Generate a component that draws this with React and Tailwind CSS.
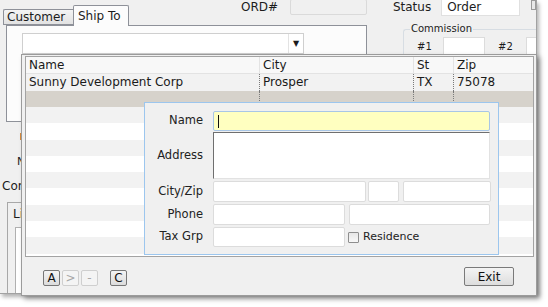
import React from "react";

const cols = [
  { key: "name", label: "Name", w: "w-[234px] border-r" },
  { key: "city", label: "City", w: "w-[154px] border-r" },
  { key: "st", label: "St", w: "w-[40px] border-r" },
  { key: "zip", label: "Zip", w: "flex-1" },
];

const rows = [
  { name: "Sunny Development Corp", city: "Prosper", st: "TX", zip: "75078" },
  { name: "", city: "", st: "", zip: "", selected: true },
];

const field = "bg-white border border-[#dcdcdc] rounded-[2px]";

const SmallButton = ({ label, disabled, className = "" }) => (
  <div
    className={`h-[16px] w-[17px] flex items-center justify-center rounded-[2px] border text-[12px] leading-none ${
      disabled
        ? "border-[#cfcfcf] bg-[#f4f4f4] text-[#a8a8a8]"
        : "border-[#777] bg-gradient-to-b from-[#f4f4f4] to-[#dcdcdc] text-[#111]"
    } ${className}`}
  >
    {label}
  </div>
);

const AddressPanel = () => (
  <div className="absolute left-[144px] top-[102px] w-[355px] h-[153px] bg-[#f0f0f0] border border-[#9cc6ee] text-[11.5px] text-[#222] pt-[8px]">
    <div className="flex h-[20px] items-center">
      <div className="w-[58px] text-right">Name</div>
      <div className="ml-[10px] w-[277px] h-full bg-[#ffffc0] border border-[#a8c6e6] rounded-[2px] flex items-center pl-[4px]">
        <span className="w-px h-[13px] bg-[#111]" />
      </div>
    </div>
    <div className="flex h-[47px] mt-[1px] items-center">
      <div className="w-[58px] text-right">Address</div>
      <div className="ml-[10px] w-[277px] h-full bg-white border-t border-l border-[#6f6f6f] border-r border-b border-r-[#e2e2e2] border-b-[#e2e2e2]" />
    </div>
    <div className="flex h-[21px] mt-[2px] items-center">
      <div className="w-[58px] text-right">City/Zip</div>
      <div className={`ml-[10px] w-[153px] h-full ${field}`} />
      <div className={`ml-[2px] w-[31px] h-full ${field}`} />
      <div className={`ml-[4px] w-[88px] h-full ${field}`} />
    </div>
    <div className="flex h-[21px] mt-[2px] items-center">
      <div className="w-[58px] text-right">Phone</div>
      <div className={`ml-[10px] w-[132px] h-full ${field}`} />
      <div className={`ml-[4px] w-[141px] h-full ${field}`} />
    </div>
    <div className="flex h-[20px] mt-[2px] items-center">
      <div className="w-[58px] text-right">Tax Grp</div>
      <div className={`ml-[10px] w-[132px] h-full ${field}`} />
      <div className="ml-[3px] w-[11px] h-[11px] border border-[#8e8e8e] bg-gradient-to-b from-[#e6e6e6] to-[#f8f8f8] rounded-[1px]" />
      <div className="ml-[4px] text-[11px]">Residence</div>
    </div>
  </div>
);

const Popup = () => (
  <div className="absolute left-[21px] top-[54px] w-[516px] h-[242px] bg-[#f0f0f0] border border-[#9b9b9b] shadow-[3px_3px_5px_rgba(0,0,0,0.35)] flex flex-col">
    <div className="ml-[3px] mr-[2px] mt-[1px] h-[201px] bg-white border border-[#a3a3a3] overflow-hidden text-[12px] text-[#1a1a1a]">
      <div className="flex h-[17px] bg-[#f8f8f8] border-b border-[#e3e3e3]">
        {cols.map((c) => (
          <div key={c.key} className={`${c.w} border-[#e3e3e3] pl-[3px] leading-[16px]`}>
            {c.label}
          </div>
        ))}
      </div>
      {rows.map((r, i) => (
        <div
          key={i}
          className={`flex h-[16.5px] ${r.selected ? "bg-[#d6d2cb]" : "bg-[#f2f2f2]"}`}
        >
          {cols.map((c) => (
            <div
              key={c.key}
              className={`${c.w} border-dotted border-[#7a7a7a] pl-[3px] leading-[16px]`}
            >
              {r[c.key]}
            </div>
          ))}
        </div>
      ))}
      {Array.from({ length: 10 }).map((_, i) => (
        <div key={i} className={`h-[16.3px] ${i % 2 === 0 ? "bg-[#f2f2f2]" : "bg-white"}`} />
      ))}
    </div>
    <div className="flex items-end h-[29px] pl-[21px] pr-[22px]">
      <SmallButton label="A" />
      <SmallButton label=">" disabled className="ml-[2px]" />
      <SmallButton label="-" disabled className="ml-[2px]" />
      <SmallButton label="C" className="ml-[12px]" />
      <div className="ml-auto w-[50px] h-[19px] flex items-center justify-center rounded-[2px] border border-[#7a7a7a] bg-gradient-to-b from-[#f4f4f4] to-[#dddddd] text-[12px] text-[#111]">
        Exit
      </div>
    </div>
  </div>
);

export default function App() {
  return (
    <div className="relative w-[548px] h-[307px] bg-white overflow-hidden font-['DejaVu_Sans',sans-serif] text-[#1c1c1c]">
      {/* background window */}
      <div className="w-[537px] h-[294px] bg-[#f0f0f0] border-r border-b border-[#a2a2a2] shadow-[2px_3px_4px_rgba(0,0,0,0.3)] overflow-hidden">
        <div className="flex h-[25px] items-start">
          <div className="flex items-end h-full pl-[3px]">
            <div className="h-[16px] w-[70px] border border-r-0 border-[#8e9199] rounded-tl-[2px] bg-gradient-to-b from-[#f4f4f4] to-[#e2e2e2] text-[12px] leading-[14px] pl-[3px]">
              Customer
            </div>
            <div className="relative z-10 -mb-px h-[21px] w-[56px] border border-b-0 border-[#8e9199] rounded-t-[2px] bg-[#fcfcfc] text-[12px] leading-[14px] pl-[4px] pt-[3px]">
              Ship To
            </div>
          </div>
          <div className="ml-[112px] text-[12px] leading-[14px]">ORD#</div>
          <div className="ml-[12px] -mt-px w-[78px] h-[16px] border border-[#dadada] rounded-[2px]" />
          <div className="ml-[26px] text-[12px] leading-[14px]">Status</div>
          <div className="ml-[10px] -mt-px w-[80px] h-[17px] bg-white border border-[#e0e0e0] text-[12px] leading-[14px] pl-[5px]">
            Order
          </div>
          <div className="ml-[11px] w-[5px] h-[10px] border border-[#9a9a9a] bg-[#e8e8e8]" />
        </div>

        <div className="flex">
          <div className="w-[367px]">
            <div className="ml-[6px] w-[361px] h-[97px] border border-[#8e9199] bg-[#fcfcfc] pt-[7px] pl-[15px]">
              <div className="flex w-[282px] h-[21px] bg-white border border-[#cfcfcf]">
                <div className="flex-1" />
                <div className="w-[15px] border-l border-[#e3e3e3] flex items-center justify-center text-[8px] leading-none">
                  ▼
                </div>
              </div>
            </div>
            <div className="ml-[20px] mt-[11px] w-[3px] h-[7px] bg-[#d98c3c]" />
            <div className="ml-[17px] mt-[15px] text-[11px] leading-[13px]">Name</div>
            <div className="ml-[2px] mt-[11px] text-[12px] leading-[14px]">Comments</div>
            <div className="ml-[7px] mt-[9px] w-[300px] h-[100px] border-t border-l border-[#a8a8a8] pt-[4px] pl-[5px]">
              <div className="text-[12px] leading-[14px]">Line Items</div>
              <div className="mt-[6px] ml-[2px] h-[80px] border-t border-l border-[#b0b0b0] bg-white" />
            </div>
          </div>

          <div className="relative ml-[36px] mt-[4px] w-[140px] h-[50px] border-t border-l border-[#d7dde3] rounded-tl-[3px]">
            <div className="absolute -top-[7px] left-[6px] bg-[#f0f0f0] px-px text-[10px] leading-[12px]">
              Commission
            </div>
            <div className="flex items-center mt-[7px] h-[18px]">
              <div className="ml-[13px] text-[10px]">#1</div>
              <div className="ml-[11px] w-[50px] h-full bg-white border border-[#dcdcdc]" />
              <div className="ml-[13px] text-[10px]">#2</div>
              <div className="ml-[13px] w-[20px] h-full bg-white border border-[#dcdcdc]" />
            </div>
          </div>
        </div>
      </div>

      <Popup />
      <AddressPanel />
    </div>
  );
}
